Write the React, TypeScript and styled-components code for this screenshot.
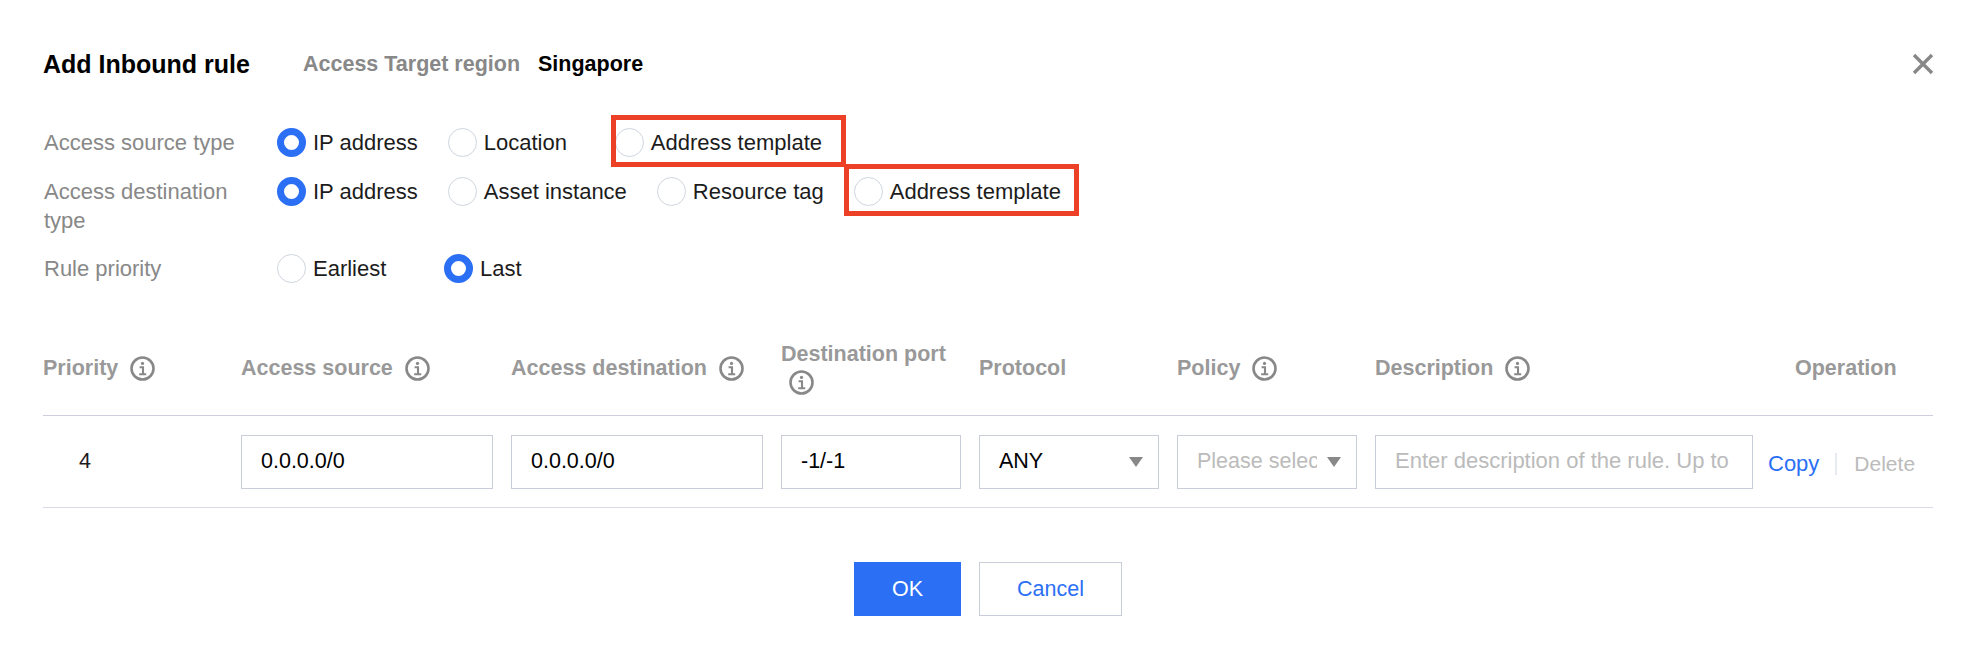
import React from "react";
import styled, { createGlobalStyle } from "styled-components";

const GlobalStyle = createGlobalStyle`
  html, body {
    margin: 0;
    padding: 0;
    background: #fff;
  }
  body {
    font-family: "Liberation Sans", Arial, sans-serif;
    color: #000;
    overflow: hidden;
  }
`;

const InfoIcon = () => (
  <InfoSvg viewBox="0 0 25 25" fill="none" stroke="#888" aria-hidden="true">
    <circle cx="12.5" cy="12.5" r="11" strokeWidth="2.6" />
    <circle cx="12.5" cy="7.4" r="1.6" fill="#888" stroke="none" />
    <path d="M9.6 11.2h3.4v6.8M9.2 18.2h7" strokeWidth="2.1" />
  </InfoSvg>
);

const Radio = ({ label, checked, marked }: { label: string; checked?: boolean; marked?: "source" | "destination" }) => (
  <Option>
    <RadioMark $checked={checked} />
    <OptionText>{label}</OptionText>
    {marked && <Highlight $kind={marked} />}
  </Option>
);

const columns = [
  { title: "Priority", info: true },
  { title: "Access source", info: true },
  { title: "Access destination", info: true },
  { title: "Destination port", info: true, wrap: true },
  { title: "Protocol" },
  { title: "Policy", info: true },
  { title: "Description", info: true },
  { title: "Operation", operation: true },
];

export default function App() {
  return (
    <>
      <GlobalStyle />
      <Dialog>
        <Header>
          <Title>Add Inbound rule</Title>
          <RegionLabel>Access Target region</RegionLabel>
          <RegionValue>Singapore</RegionValue>
          <CloseButton viewBox="0 0 22 22" aria-label="Close">
            <path d="M2 2l18 18M20 2L2 20" stroke="#888" strokeWidth="3.4" />
          </CloseButton>
        </Header>

        <Form>
          <FormRow $height={49}>
            <FormLabel>Access source type</FormLabel>
            <Radio label="IP address" checked />
            <Radio label="Location" />
            <Radio label="Address template" marked="source" />
          </FormRow>
          <FormRow $height={77}>
            <FormLabel>Access destination type</FormLabel>
            <Radio label="IP address" checked />
            <Radio label="Asset instance" />
            <Radio label="Resource tag" />
            <Radio label="Address template" marked="destination" />
          </FormRow>
          <FormRow $height={29}>
            <FormLabel>Rule priority</FormLabel>
            <Radio label="Earliest" />
            <Radio label="Last" checked />
          </FormRow>
        </Form>

        <Table>
          <HeadRow>
            {columns.map((col) => (
              <HeadCell key={col.title} $wrap={col.wrap} $operation={col.operation}>
                <span>{col.title}</span>
                {col.info && <InfoIcon />}
              </HeadCell>
            ))}
          </HeadRow>
          <BodyRow>
            <PriorityCell>4</PriorityCell>
            <Cell>
              <TextInput readOnly value="0.0.0.0/0" />
            </Cell>
            <Cell>
              <TextInput readOnly value="0.0.0.0/0" />
            </Cell>
            <Cell>
              <TextInput readOnly value="-1/-1" />
            </Cell>
            <Cell>
              <Select>
                <SelectValue>ANY</SelectValue>
                <Caret />
              </Select>
            </Cell>
            <Cell>
              <Select>
                <SelectValue $placeholder>Please select</SelectValue>
                <Caret />
              </Select>
            </Cell>
            <DescriptionCell>
              <TextInput readOnly placeholder="Enter description of the rule. Up to" />
            </DescriptionCell>
            <Actions>
              <ActionLink>Copy</ActionLink>
              <ActionDivider />
              <ActionLink $disabled>Delete</ActionLink>
            </Actions>
          </BodyRow>
        </Table>

        <Footer>
          <PrimaryButton>OK</PrimaryButton>
          <DefaultButton>Cancel</DefaultButton>
        </Footer>
      </Dialog>
    </>
  );
}

const Dialog = styled.div`
  width: 1972px;
  height: 660px;
  box-sizing: border-box;
  padding: 49px 39px 0 43px;
`;

const Header = styled.div`
  display: flex;
  align-items: center;
  height: 30px;
`;

const Title = styled.h2`
  margin: 0;
  font-size: 25px;
  font-weight: 700;
  width: 260px;
`;

const RegionLabel = styled.span`
  font-size: 21.5px;
  font-weight: 700;
  color: #888;
  width: 235px;
`;

const RegionValue = styled.span`
  font-size: 21.5px;
  font-weight: 700;
`;

const CloseButton = styled.svg`
  width: 22px;
  height: 22px;
  margin-left: auto;
  margin-right: -1px;
`;

const Form = styled.div`
  margin-top: 49px;
`;

const FormRow = styled.div<{ $height: number }>`
  display: flex;
  align-items: flex-start;
  height: ${(p) => p.$height}px;
`;

const FormLabel = styled.label`
  width: 234px;
  flex: none;
  padding: 0 20px 0 1px;
  box-sizing: border-box;
  font-size: 22px;
  line-height: 29px;
  color: #888;
`;

const Option = styled.div`
  position: relative;
  display: flex;
  align-items: center;
  min-width: 137px;
  height: 29px;
  margin-right: 30px;
`;

const RadioMark = styled.span<{ $checked?: boolean }>`
  width: 29px;
  height: 29px;
  box-sizing: border-box;
  border-radius: 50%;
  background: #fff;
  border: ${(p) => (p.$checked ? "7px solid #2b6ff5" : "1px solid #cfd5de")};
  margin-right: 7px;
`;

const OptionText = styled.span`
  font-size: 22px;
  color: #1c1c1c;
`;

const Highlight = styled.span<{ $kind: "source" | "destination" }>`
  position: absolute;
  top: -13px;
  bottom: -10px;
  left: ${(p) => (p.$kind === "source" ? "-4px" : "-10px")};
  right: ${(p) => (p.$kind === "source" ? "-24px" : "-18px")};
  border: 5px solid #ec4126;
  pointer-events: none;
`;

const Table = styled.div`
  margin-top: 38px;
  width: 1890px;
`;

const tableColumns = "198px 270px 270px 198px 198px 198px 393px 165px";

const HeadRow = styled.div`
  display: grid;
  grid-template-columns: ${tableColumns};
  height: 94px;
  border-bottom: 1px solid #cdd0dc;
`;

const HeadCell = styled.div<{ $wrap?: boolean; $operation?: boolean }>`
  display: flex;
  flex-wrap: ${(p) => (p.$wrap ? "wrap" : "nowrap")};
  align-items: center;
  align-content: center;
  column-gap: 12px;
  row-gap: 3px;
  padding-left: ${(p) => (p.$operation ? "27px" : "0")};
  padding-right: ${(p) => (p.$wrap ? "18px" : "0")};
  font-size: 21.5px;
  font-weight: 700;
  color: #999;

  ${(p) => p.$wrap && "svg { margin-left: 8px; }"}
`;

const InfoSvg = styled.svg`
  width: 25px;
  height: 25px;
  flex: none;
`;

const BodyRow = styled.div`
  display: grid;
  grid-template-columns: ${tableColumns};
  align-items: center;
  height: 91px;
  border-bottom: 1px solid #d8dbe4;
`;

const Cell = styled.div`
  padding-right: 18px;
  min-width: 0;
`;

const DescriptionCell = styled(Cell)`
  padding-right: 15px;
`;

const PriorityCell = styled(Cell)`
  padding-left: 36px;
  font-size: 21.5px;
  color: #1c1c1c;
`;

const TextInput = styled.input`
  display: block;
  width: 100%;
  height: 54px;
  box-sizing: border-box;
  padding: 0 19px;
  border: 1px solid #c9cdda;
  border-radius: 0;
  outline: none;
  font-family: inherit;
  font-size: 21.5px;
  color: #000;
  background: #fff;

  &::placeholder {
    color: #bbb;
    opacity: 1;
    font-size: 22px;
  }
`;

const Select = styled.div`
  display: flex;
  align-items: center;
  height: 54px;
  box-sizing: border-box;
  padding: 0 15px 0 19px;
  border: 1px solid #c9cdda;
  font-size: 21.5px;
`;

const SelectValue = styled.span<{ $placeholder?: boolean }>`
  flex: 1;
  min-width: 0;
  overflow: hidden;
  white-space: nowrap;
  color: ${(p) => (p.$placeholder ? "#bbb" : "#000")};
`;

const Caret = styled.span`
  flex: none;
  margin-left: 10px;
  width: 0;
  height: 0;
  border-left: 7px solid transparent;
  border-right: 7px solid transparent;
  border-top: 10px solid #888;
`;

const Actions = styled.div`
  display: flex;
  align-items: center;
  font-size: 22px;
  margin-top: 4px;
`;

const ActionLink = styled.a<{ $disabled?: boolean }>`
  color: ${(p) => (p.$disabled ? "#bbb" : "#2b6ff5")};
  font-size: ${(p) => (p.$disabled ? "21px" : "22px")};
  cursor: pointer;
`;

const ActionDivider = styled.span`
  width: 2px;
  height: 22px;
  background: #e8eaf2;
  margin: 0 17px 0 16px;
`;

const Footer = styled.div`
  display: flex;
  justify-content: center;
  gap: 18px;
  margin-top: 54px;
  width: 1890px;
`;

const PrimaryButton = styled.button`
  width: 107px;
  height: 54px;
  border: none;
  border-radius: 0;
  background: #2b6ff5;
  color: #fff;
  font-family: inherit;
  font-size: 21.5px;
  cursor: pointer;
`;

const DefaultButton = styled(PrimaryButton)`
  width: 143px;
  background: #fff;
  border: 1px solid #c9cdda;
  color: #2b6ff5;
`;
